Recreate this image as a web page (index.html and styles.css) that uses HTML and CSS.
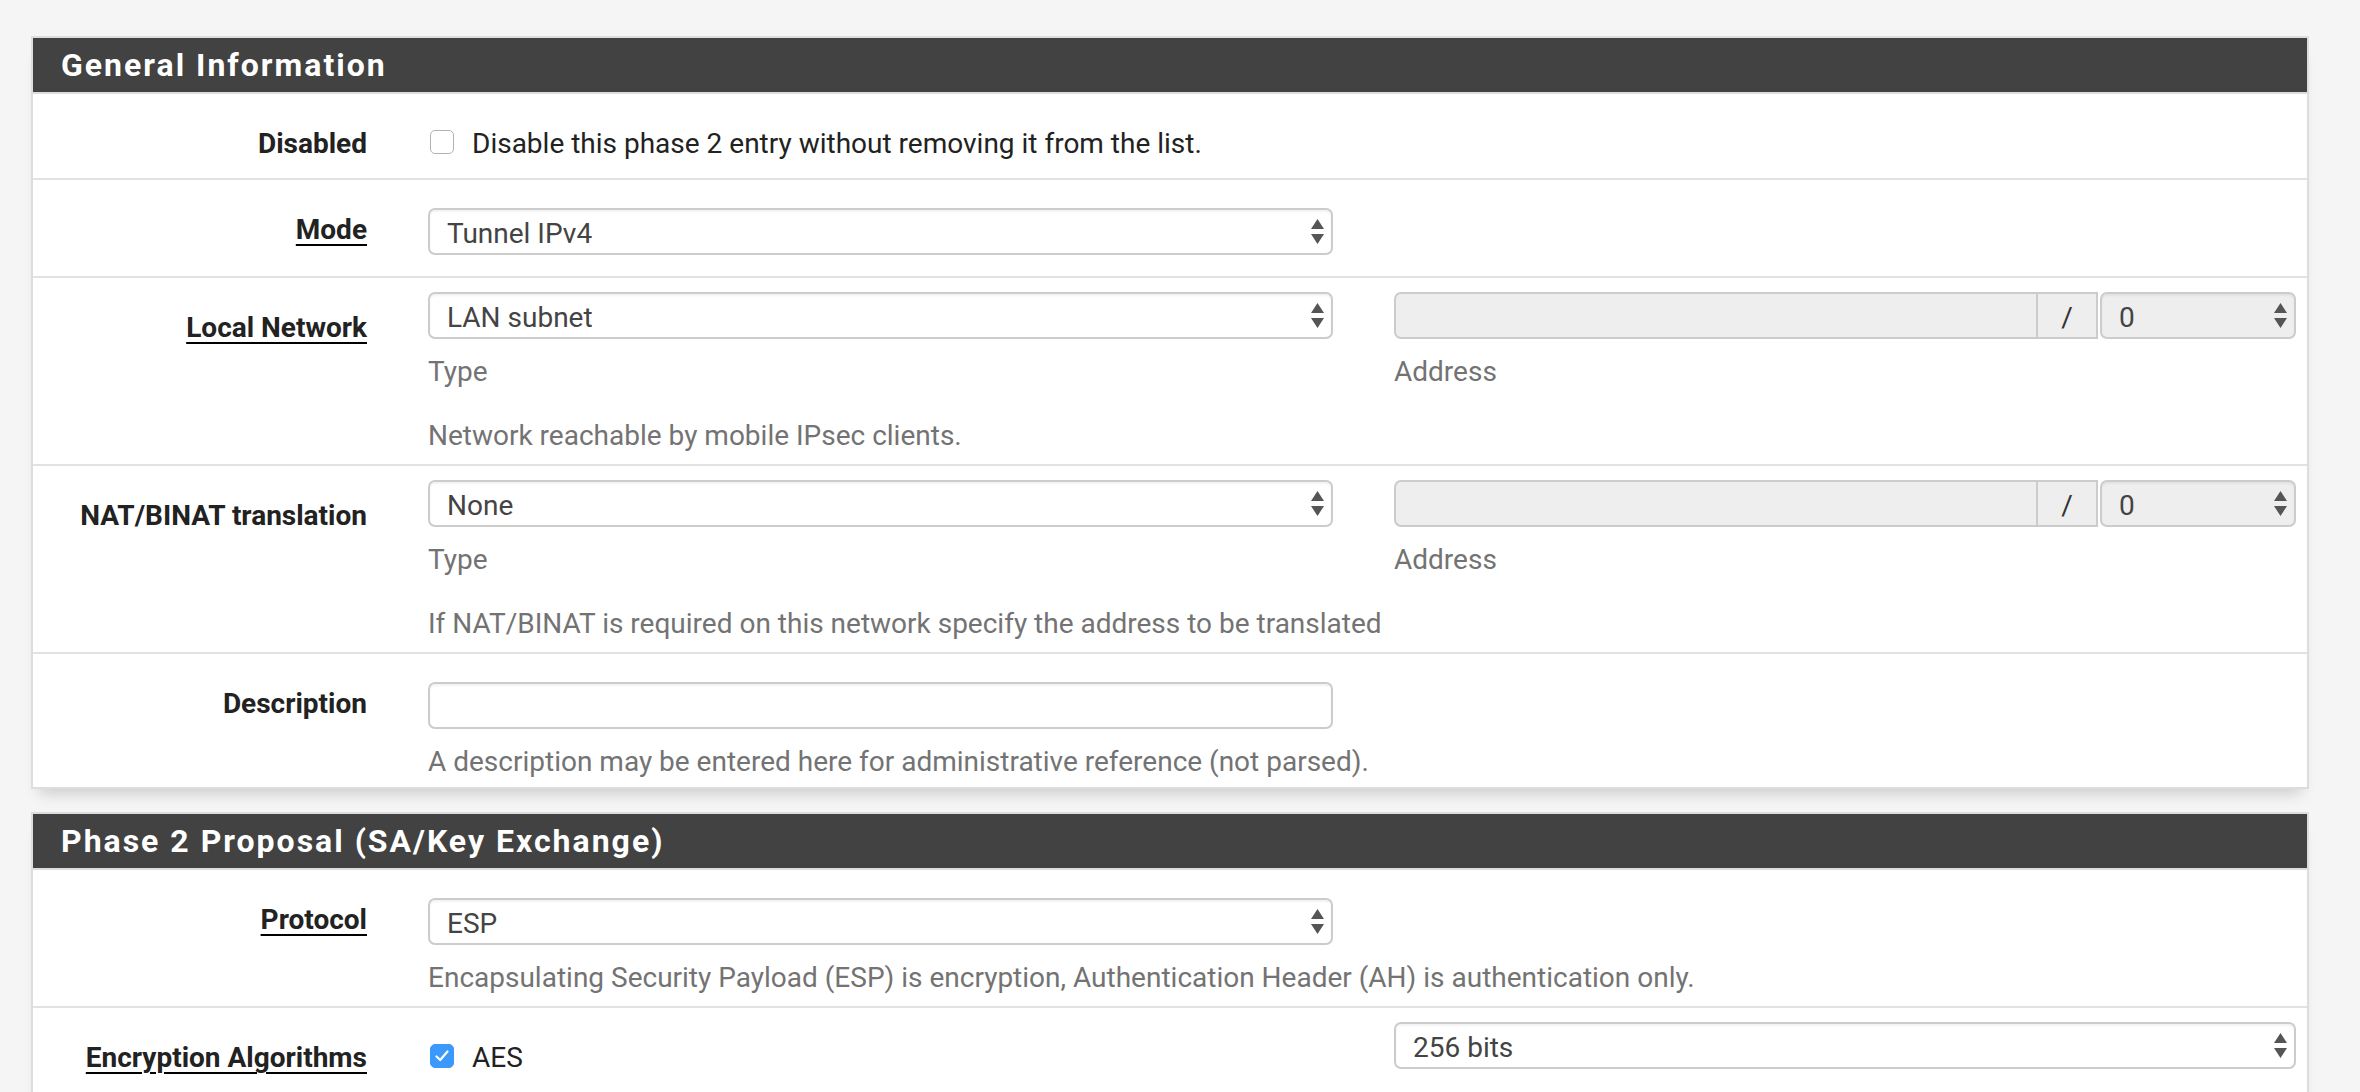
FILE: index.html
```html
<!DOCTYPE html>
<html lang="en">
<head>
<meta charset="utf-8">
<title>Phase 2</title>
<link rel="stylesheet" href="styles.css">
</head>
<body>
<div class="page">
  <section class="panel">
    <h2 class="panel-heading">General Information</h2>

    <div class="row row-check">
      <div class="label">Disabled</div>
      <div class="ctl ctl-wide">
        <div class="check"><span class="box"></span><span class="txt">Disable this phase 2 entry without removing it from the list.</span></div>
      </div>
    </div>

    <div class="row">
      <div class="label"><span class="req">Mode</span></div>
      <div class="ctl ctl-wide ctl-top">
        <div class="select w905"><span class="txt">Tunnel IPv4</span><svg class="arrows" width="13" height="25" viewBox="0 0 13 25"><path d="M6.5 0L13 10H0Z M0 15H13L6.5 25Z"/></svg></div>
      </div>
    </div>

    <div class="row">
      <div class="label"><span class="req">Local Network</span></div>
      <div class="ctl">
        <div class="select"><span class="txt">LAN subnet</span><svg class="arrows" width="13" height="25" viewBox="0 0 13 25"><path d="M6.5 0L13 10H0Z M0 15H13L6.5 25Z"/></svg></div>
        <div class="help">Type</div>
      </div>
      <div class="ctl">
        <div class="addr-group">
          <div class="addr-input"></div>
          <div class="addon"><span class="txt">/</span></div>
          <div class="select disabled mask"><span class="txt">0</span><svg class="arrows" width="13" height="25" viewBox="0 0 13 25"><path d="M6.5 0L13 10H0Z M0 15H13L6.5 25Z"/></svg></div>
        </div>
        <div class="help">Address</div>
      </div>
      <div class="help help-full">Network reachable by mobile IPsec clients.</div>
    </div>

    <div class="row">
      <div class="label">NAT/BINAT translation</div>
      <div class="ctl">
        <div class="select"><span class="txt">None</span><svg class="arrows" width="13" height="25" viewBox="0 0 13 25"><path d="M6.5 0L13 10H0Z M0 15H13L6.5 25Z"/></svg></div>
        <div class="help">Type</div>
      </div>
      <div class="ctl">
        <div class="addr-group">
          <div class="addr-input"></div>
          <div class="addon"><span class="txt">/</span></div>
          <div class="select disabled mask"><span class="txt">0</span><svg class="arrows" width="13" height="25" viewBox="0 0 13 25"><path d="M6.5 0L13 10H0Z M0 15H13L6.5 25Z"/></svg></div>
        </div>
        <div class="help">Address</div>
      </div>
      <div class="help help-full">If NAT/BINAT is required on this network specify the address to be translated</div>
    </div>

    <div class="row row-last">
      <div class="label">Description</div>
      <div class="ctl ctl-wide ctl-top">
        <div class="input w905"></div>
        <div class="help">A description may be entered here for administrative reference (not parsed).</div>
      </div>
    </div>
  </section>

  <section class="panel">
    <h2 class="panel-heading">Phase 2 Proposal (SA/Key Exchange)</h2>

    <div class="row">
      <div class="label"><span class="req">Protocol</span></div>
      <div class="ctl ctl-wide ctl-top">
        <div class="select w905"><span class="txt">ESP</span><svg class="arrows" width="13" height="25" viewBox="0 0 13 25"><path d="M6.5 0L13 10H0Z M0 15H13L6.5 25Z"/></svg></div>
        <div class="help">Encapsulating Security Payload (ESP) is encryption, Authentication Header (AH) is authentication only.</div>
      </div>
    </div>

    <div class="row row-tall">
      <div class="label"><span class="req">Encryption Algorithms</span></div>
      <div class="ctl">
        <div class="check"><span class="box on"><svg width="14" height="12" viewBox="0 0 14 12"><path d="M1.5 6.5L5.2 10L12.5 1.5" fill="none" stroke="#fff" stroke-width="2.2" stroke-linecap="round" stroke-linejoin="round"/></svg></span><span class="txt">AES</span></div>
      </div>
      <div class="ctl">
        <div class="select"><span class="txt">256 bits</span><svg class="arrows" width="13" height="25" viewBox="0 0 13 25"><path d="M6.5 0L13 10H0Z M0 15H13L6.5 25Z"/></svg></div>
      </div>
    </div>
  </section>
</div>
</body>
</html>
```

FILE: styles.css
```css
html, body {
  margin: 0;
  padding: 0;
  height: 1092px;
  overflow: hidden;
  background: #f5f5f5;
}

body {
  font-family: Roboto, "Liberation Sans", Arial, sans-serif;
  font-size: 28px;
  line-height: 40px;
  color: #222;
}

.page {
  padding: 36px 0 0 31px;
  width: 2278px;
}

.panel {
  box-sizing: border-box;
  width: 2278px;
  background: #fff;
  border: 2px solid #dddddd;
  box-shadow: 0 12px 14px -8px rgba(0, 0, 0, 0.18);
  margin-bottom: 23px;
}

.panel-heading {
  margin: 0;
  height: 54px;
  line-height: 54px;
  padding-left: 28px;
  background: #424242;
  color: #fff;
  font-size: 32px;
  font-weight: 700;
  letter-spacing: 2px;
  border-bottom: 2px solid #dddddd;
}

.row {
  display: grid;
  grid-template-columns: 334px 905px 902px;
  column-gap: 61px;
  padding: 14px 0 10px;
  border-top: 2px solid #e2e2e2;
}

.panel-heading + .row {
  border-top: 0;
}

.row-check {
  padding-bottom: 16px;
}

.row-last {
  padding-bottom: 7px;
}

.row-tall {
  padding-bottom: 60px;
}

.label {
  grid-column: 1;
  padding-top: 16px;
  margin-bottom: -2px;
  text-align: right;
  font-weight: 700;
  color: #222;
  white-space: nowrap;
}

.req {
  text-decoration: underline;
  text-decoration-thickness: 2px;
  text-underline-offset: 5px;
  text-decoration-color: #000;
}

.ctl-wide {
  grid-column: 2 / 4;
}

.ctl-top {
  padding-top: 14px;
}

.select,
.input {
  box-sizing: border-box;
  height: 47px;
  border: 2px solid #cccccc;
  border-radius: 7px;
  background: #fff;
  box-shadow: inset 0 2px 2px rgba(0, 0, 0, 0.05);
  margin-bottom: 11px;
}

.select {
  display: flex;
  align-items: center;
  justify-content: space-between;
  padding: 0 7px 0 17px;
  color: #444;
}

.txt {
  padding-top: 4px;
}

.w905 {
  width: 905px;
}

.arrows {
  fill: #555;
  flex: none;
}

.help {
  color: #737373;
  white-space: nowrap;
  padding-top: 2px;
  margin-bottom: -2px;
}

.help-full {
  grid-column: 2 / 4;
  margin-top: 24px;
}

.addr-group {
  display: flex;
  height: 47px;
  margin-bottom: 11px;
}

.addr-input {
  flex: 1;
  box-sizing: border-box;
  background: #eeeeee;
  border: 2px solid #cccccc;
  border-right: 0;
  border-radius: 7px 0 0 7px;
}

.addon {
  box-sizing: border-box;
  width: 62px;
  display: flex;
  align-items: center;
  justify-content: center;
  background: #eeeeee;
  border: 2px solid #cccccc;
  color: #333;
}

.select.mask {
  width: 196px;
  margin-left: 2px;
  margin-bottom: 0;
  background: #eeeeee;
}

.check {
  display: flex;
  align-items: center;
  height: 40px;
  margin-top: 14px;
  color: #222;
}

.box {
  box-sizing: border-box;
  width: 24px;
  height: 24px;
  margin: 0 18px 0 2px;
  border: 1.5px solid #b3b3b3;
  border-radius: 5px;
  background: #fff;
  display: flex;
  align-items: center;
  justify-content: center;
  flex: none;
}

.box.on {
  background: #3b99fc;
  border-color: #3b99fc;
}
```
